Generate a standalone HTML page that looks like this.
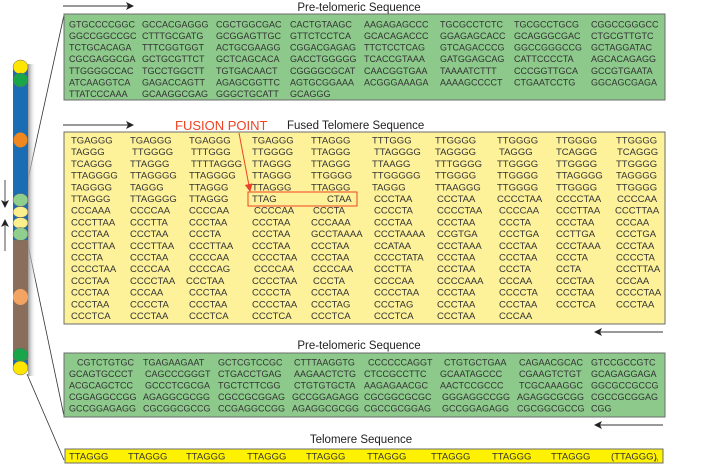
<!DOCTYPE html>
<html><head><meta charset="utf-8"><style>
html,body{margin:0;padding:0;background:#fff;width:702px;height:473px;overflow:hidden}
svg{display:block}
text{font-family:"Liberation Sans",sans-serif;fill:#333}
.s{font-size:9.5px}
.g{font-size:9px}
.t{font-size:11.5px;fill:#222}
</style></head><body>
<svg width="702" height="473" viewBox="0 0 702 473" xmlns="http://www.w3.org/2000/svg">
<defs>
<marker id="ah" markerWidth="8" markerHeight="8" refX="7" refY="4" orient="auto" markerUnits="userSpaceOnUse"><path d="M0,0 L8,4 L0,8 L2,4 z" fill="#222"/></marker>
<marker id="rh" markerWidth="8" markerHeight="8" refX="7" refY="4" orient="auto" markerUnits="userSpaceOnUse"><path d="M0,0 L8,4 L0,8 z" fill="#e8402a"/></marker>
<linearGradient id="sh" x1="0" x2="1"><stop offset="0" stop-color="#999"/><stop offset="1" stop-color="#fff" stop-opacity="0"/></linearGradient>
</defs>

<line x1="25" y1="193" x2="64" y2="15" stroke="#333" stroke-width="0.8"/>
<line x1="27" y1="240" x2="64" y2="416" stroke="#333" stroke-width="0.8"/>
<line x1="27" y1="374" x2="64" y2="460" stroke="#333" stroke-width="0.8"/>

<rect x="28" y="64" width="8" height="312" fill="url(#sh)"/>
<rect x="13" y="66" width="15" height="302" fill="#1a6db4"/>
<rect x="13" y="240" width="15" height="120" fill="#8b6d5b"/>
<ellipse cx="20.5" cy="67" rx="7.5" ry="7" fill="#ffe600" stroke="#666" stroke-width="0.5"/>
<ellipse cx="20.5" cy="80" rx="7.5" ry="7" fill="#19a54a" stroke="#666" stroke-width="0.5"/>
<ellipse cx="20.5" cy="140" rx="7" ry="7.5" fill="#f0871f"/>
<ellipse cx="20.5" cy="200" rx="7.5" ry="6.5" fill="#8fce8d" stroke="#666" stroke-width="0.5"/>
<ellipse cx="20.5" cy="212" rx="7.5" ry="5.5" fill="#fdf08c" stroke="#666" stroke-width="0.5"/>
<ellipse cx="20.5" cy="223" rx="7.5" ry="5.5" fill="#fdf08c" stroke="#666" stroke-width="0.5"/>
<ellipse cx="20.5" cy="234" rx="7.5" ry="6.5" fill="#8fce8d" stroke="#666" stroke-width="0.5"/>
<ellipse cx="20.5" cy="297" rx="7.5" ry="8" fill="#f4a462"/>
<ellipse cx="20.5" cy="355" rx="7.5" ry="7" fill="#19a54a" stroke="#666" stroke-width="0.5"/>
<ellipse cx="20.5" cy="368" rx="7.5" ry="7" fill="#ffe600" stroke="#666" stroke-width="0.5"/>
<line x1="5" y1="180" x2="5" y2="207" stroke="#222" stroke-width="0.8" marker-end="url(#ah)"/>
<line x1="5" y1="251" x2="5" y2="220" stroke="#222" stroke-width="0.8" marker-end="url(#ah)"/>

<line x1="63" y1="6" x2="133" y2="6" stroke="#333" stroke-width="1" marker-end="url(#ah)"/>
<line x1="63" y1="125" x2="133" y2="125" stroke="#333" stroke-width="1" marker-end="url(#ah)"/>
<line x1="663" y1="332" x2="595" y2="332" stroke="#333" stroke-width="1" marker-end="url(#ah)"/>
<line x1="663" y1="425" x2="595" y2="425" stroke="#333" stroke-width="1" marker-end="url(#ah)"/>

<text class="t" x="359" y="11" text-anchor="middle">Pre-telomeric Sequence</text>
<text class="t" x="287" y="129">Fused Telomere Sequence</text>
<text x="175" y="130" style="font-size:13px;fill:#ee4422">FUSION POINT</text>
<text class="t" x="359" y="349" text-anchor="middle">Pre-telomeric Sequence</text>
<text class="t" x="361" y="443" text-anchor="middle">Telomere Sequence</text>

<rect x="64" y="14" width="601" height="86" fill="#8cc98b" stroke="#6d6d6d" stroke-width="1"/>
<g class="g">
<text y="27.5"><tspan x="69">GTGCCCCGGC</tspan><tspan x="142">GCCACGAGGG</tspan><tspan x="216">CGCTGGCGAC</tspan><tspan x="290">CACTGTAAGC</tspan><tspan x="364">AAGAGAGCCC</tspan><tspan x="440">TGCGCCTCTC</tspan><tspan x="514">TGCGCCTGCG</tspan><tspan x="591">CGGCCGGGCC</tspan></text>
<text y="39"><tspan x="69">GGCCGGCCGC</tspan><tspan x="142">CTTTGCGATG</tspan><tspan x="216">GCGGAGTTGC</tspan><tspan x="290">GTTCTCCTCA</tspan><tspan x="364">GCACAGACCC</tspan><tspan x="440">GGAGAGCACC</tspan><tspan x="514">GCAGGGCGAC</tspan><tspan x="591">CTGCGTTGTC</tspan></text>
<text y="50.5"><tspan x="69">TCTGCACAGA</tspan><tspan x="142">TTTCGGTGGT</tspan><tspan x="216">ACTGCGAAGG</tspan><tspan x="290">CGGACGAGAG</tspan><tspan x="364">TTCTCCTCAG</tspan><tspan x="440">GTCAGACCCG</tspan><tspan x="514">GGCCGGGCCG</tspan><tspan x="591">GCTAGGATAC</tspan></text>
<text y="62"><tspan x="69">CGCGAGGCGA</tspan><tspan x="142">GCTGCGTTCT</tspan><tspan x="216">GCTCAGCACA</tspan><tspan x="290">GACCTGGGGG</tspan><tspan x="364">TCACCGTAAA</tspan><tspan x="440">GATGGAGCAG</tspan><tspan x="514">CATTCCCCTA</tspan><tspan x="591">AGCACAGAGG</tspan></text>
<text y="74"><tspan x="69">TTGGGGCCAC</tspan><tspan x="142">TGCCTGGCTT</tspan><tspan x="216">TGTGACAACT</tspan><tspan x="290">CGGGGCGCAT</tspan><tspan x="364">CAACGGTGAA</tspan><tspan x="440">TAAAATCTTT</tspan><tspan x="514">CCCGGTTGCA</tspan><tspan x="591">GCCGTGAATA</tspan></text>
<text y="85.5"><tspan x="69">ATCAAGGTCA</tspan><tspan x="142">GAGACCAGTT</tspan><tspan x="216">AGAGCGGTTC</tspan><tspan x="290">AGTGCGGAAA</tspan><tspan x="364">ACGGGAAAGA</tspan><tspan x="440">AAAAGCCCCT</tspan><tspan x="514">CTGAATCCTG</tspan><tspan x="591">GGCAGCGAGA</tspan></text>
<text y="97"><tspan x="69">TTATCCCAAA</tspan><tspan x="142">GCAAGGCGAG</tspan><tspan x="216">GGGCTGCATT</tspan><tspan x="290">GCAGGG</tspan></text>
</g>

<rect x="64" y="132" width="601" height="192" fill="#fdf19a" stroke="#6d6d6d" stroke-width="1"/>
<g class="s">
<text y="143.5"><tspan x="71">TGAGGG</tspan><tspan x="130">TGAGGG</tspan><tspan x="189">TGAGGG</tspan><tspan x="252">TGAGGG</tspan><tspan x="311">TTAGGG</tspan><tspan x="372">TTTGGG</tspan><tspan x="435">TTGGGG</tspan><tspan x="497">TTGGGG</tspan><tspan x="556">TTGGGG</tspan><tspan x="616">TTGGGG</tspan></text>
<text y="155.2"><tspan x="71">TAGGG</tspan><tspan x="132">TTGGGG</tspan><tspan x="191">TTTGGG</tspan><tspan x="252">TTGGGG</tspan><tspan x="311">TTAGGG</tspan><tspan x="374">TTAGGGG</tspan><tspan x="435">TAGGGG</tspan><tspan x="499">TAGGG</tspan><tspan x="556">TCAGGG</tspan><tspan x="617">TCAGGG</tspan></text>
<text y="166.9"><tspan x="71">TCAGGG</tspan><tspan x="130">TTAGGG</tspan><tspan x="191">TTTTAGGG</tspan><tspan x="252">TTAGGG</tspan><tspan x="311">TTAGGG</tspan><tspan x="372">TTAAGG</tspan><tspan x="435">TTTGGGG</tspan><tspan x="497">TTGGGG</tspan><tspan x="556">TTGGGG</tspan><tspan x="616">TTGGGG</tspan></text>
<text y="178.6"><tspan x="71">TTAGGGG</tspan><tspan x="130">TTAGGGG</tspan><tspan x="189">TTAGGGG</tspan><tspan x="252">TTAGGG</tspan><tspan x="311">TTGGGG</tspan><tspan x="372">TTGGGGG</tspan><tspan x="435">TTGGGG</tspan><tspan x="497">TTGGGG</tspan><tspan x="556">TTAGGGG</tspan><tspan x="616">TAGGGG</tspan></text>
<text y="190.3"><tspan x="71">TAGGGG</tspan><tspan x="130">TAGGG</tspan><tspan x="189">TTAGGG</tspan><tspan x="252">TTAGGG</tspan><tspan x="311">TTAGGG</tspan><tspan x="372">TAGGG</tspan><tspan x="435">TTAAGGG</tspan><tspan x="497">TTGGGG</tspan><tspan x="556">TTGGGG</tspan><tspan x="616">TTGGGG</tspan></text>
<text y="202"><tspan x="71">TTAGGG</tspan><tspan x="130">TTAGGGG</tspan><tspan x="189">TTAGGG</tspan><tspan x="252">TTAG</tspan><tspan x="327">CTAA</tspan><tspan x="374">CCCTAA</tspan><tspan x="437">CCCTAA</tspan><tspan x="497">CCCCTAA</tspan><tspan x="556">CCCCTAA</tspan><tspan x="617">CCCCAA</tspan></text>
<text y="213.7"><tspan x="71">CCCAAA</tspan><tspan x="130">CCCCAA</tspan><tspan x="189">CCCCAA</tspan><tspan x="254">CCCCAA</tspan><tspan x="313">CCCTA</tspan><tspan x="374">CCCCTA</tspan><tspan x="437">CCCCTAA</tspan><tspan x="499">CCCCAA</tspan><tspan x="556">CCCTTAA</tspan><tspan x="615">CCCTTAA</tspan></text>
<text y="225.4"><tspan x="71">CCCTTAA</tspan><tspan x="130">CCCTTA</tspan><tspan x="189">CCCTAA</tspan><tspan x="252">CCCTAA</tspan><tspan x="311">CCCAAA</tspan><tspan x="374">CCCTAA</tspan><tspan x="437">CCCTAA</tspan><tspan x="499">CCCTA</tspan><tspan x="556">CCCTAA</tspan><tspan x="616">CCCAA</tspan></text>
<text y="237.1"><tspan x="71">CCCTAA</tspan><tspan x="130">CCCTAA</tspan><tspan x="189">CCCTA</tspan><tspan x="252">CCCTAA</tspan><tspan x="311">GCCTAAAA</tspan><tspan x="374">CCCTAAAA</tspan><tspan x="437">CCGTGA</tspan><tspan x="499">CCCTGA</tspan><tspan x="556">CCTTGA</tspan><tspan x="616">CCCTGA</tspan></text>
<text y="248.8"><tspan x="71">CCCTTAA</tspan><tspan x="130">CCCTTAA</tspan><tspan x="189">CCCTTAA</tspan><tspan x="252">CCCTAA</tspan><tspan x="311">CCCTAA</tspan><tspan x="374">CCATAA</tspan><tspan x="437">CCCTAAA</tspan><tspan x="499">CCCTAA</tspan><tspan x="556">CCCTAAA</tspan><tspan x="616">CCCTAA</tspan></text>
<text y="260.5"><tspan x="71">CCCTA</tspan><tspan x="130">CCCTAA</tspan><tspan x="189">CCCCAA</tspan><tspan x="252">CCCCTAA</tspan><tspan x="311">CCCTAA</tspan><tspan x="374">CCCCTATA</tspan><tspan x="437">CCCTAA</tspan><tspan x="499">CCCTAA</tspan><tspan x="556">CCCTA</tspan><tspan x="616">CCCCTA</tspan></text>
<text y="272.2"><tspan x="71">CCCCTAA</tspan><tspan x="130">CCCCAA</tspan><tspan x="189">CCCCAG</tspan><tspan x="254">CCCCAA</tspan><tspan x="313">CCCCAA</tspan><tspan x="374">CCCTTA</tspan><tspan x="437">CCCTAA</tspan><tspan x="499">CCCTA</tspan><tspan x="556">CCTA</tspan><tspan x="616">CCCTTAA</tspan></text>
<text y="283.9"><tspan x="71">CCCTAA</tspan><tspan x="130">CCCCTAA</tspan><tspan x="186">CCCTAA</tspan><tspan x="252">CCCCTAA</tspan><tspan x="313">CCCTA</tspan><tspan x="374">CCCCAA</tspan><tspan x="437">CCCCAAA</tspan><tspan x="499">CCCAA</tspan><tspan x="556">CCCTAA</tspan><tspan x="616">CCCAA</tspan></text>
<text y="295.6"><tspan x="71">CCCTAA</tspan><tspan x="130">CCCAA</tspan><tspan x="189">CCCTAA</tspan><tspan x="252">CCCCTA</tspan><tspan x="311">CCCTAA</tspan><tspan x="374">CCCCTAA</tspan><tspan x="437">CCCTAA</tspan><tspan x="499">CCCCTA</tspan><tspan x="556">CCCTAA</tspan><tspan x="616">CCCCTAA</tspan></text>
<text y="307.3"><tspan x="71">CCCTAA</tspan><tspan x="130">CCCCTA</tspan><tspan x="189">CCCTAA</tspan><tspan x="252">CCCCTAA</tspan><tspan x="311">CCCTAG</tspan><tspan x="374">CCCTAG</tspan><tspan x="437">CCCTAA</tspan><tspan x="499">CCCTAA</tspan><tspan x="556">CCCTCA</tspan><tspan x="616">CCCTAA</tspan></text>
<text y="319"><tspan x="71">CCCTCA</tspan><tspan x="130">CCCTAA</tspan><tspan x="189">CCCTCA</tspan><tspan x="252">CCCTCA</tspan><tspan x="311">CCCTCA</tspan><tspan x="374">CCCTCA</tspan><tspan x="437">CCCTAA</tspan><tspan x="499">CCCAA</tspan></text>
</g>
<rect x="248" y="192" width="109" height="14" fill="none" stroke="#ee4422" stroke-width="1"/>
<line x1="239" y1="133" x2="250" y2="191" stroke="#ee4422" stroke-width="1" marker-end="url(#rh)"/>

<rect x="64" y="353" width="601" height="64" fill="#8cc98b" stroke="#6d6d6d" stroke-width="1"/>
<g class="g">
<text y="365.5"><tspan x="77">CGTCTGTGC</tspan><tspan x="143">TGAGAAGAAT</tspan><tspan x="218">GCTCGTCCGC</tspan><tspan x="294">CTTTAAGGTG</tspan><tspan x="368">CCCCCCAGGT</tspan><tspan x="444">CTGTGCTGAA</tspan><tspan x="519">CAGAACGCAC</tspan><tspan x="591">GTCCGCCGTC</tspan></text>
<text y="377"><tspan x="69">GCAGTGCCCT</tspan><tspan x="145">CAGCCCGGGT</tspan><tspan x="218">CTGACCTGAG</tspan><tspan x="294">AAGAACTCTG</tspan><tspan x="364">CTCCGCCTTC</tspan><tspan x="440">GCAATAGCCC</tspan><tspan x="519">CGAAGTCTGT</tspan><tspan x="591">GCAGAGGAGA</tspan></text>
<text y="388.5"><tspan x="69">ACGCAGCTCC</tspan><tspan x="145">GCCCTCGCGA</tspan><tspan x="218">TGCTCTTCGG</tspan><tspan x="294">CTGTGTGCTA</tspan><tspan x="364">AAGAGAACGC</tspan><tspan x="440">AACTCCGCCC</tspan><tspan x="519">TCGCAAAGGC</tspan><tspan x="591">GGCGCCGCCG</tspan></text>
<text y="400"><tspan x="69">CGGAGGCCGG</tspan><tspan x="143">AGAGGCGCGG</tspan><tspan x="218">CGCCGCGGAG</tspan><tspan x="292">GCCGGAGAGG</tspan><tspan x="364">CGCGGCGCGC</tspan><tspan x="442">GGGAGGCCGG</tspan><tspan x="517">AGAGGCGCGG</tspan><tspan x="591">CGCCGCGGAG</tspan></text>
<text y="411.5"><tspan x="69">GCCGGAGAGG</tspan><tspan x="143">CGCGGCGCCG</tspan><tspan x="218">CCGAGGCCGG</tspan><tspan x="292">AGAGGCGCGG</tspan><tspan x="364">CGCCGCGGAG</tspan><tspan x="442">GCCGGAGAGG</tspan><tspan x="517">CGCGGCGCCG</tspan><tspan x="591">CGG</tspan></text>
</g>

<rect x="65" y="449" width="598" height="14" fill="#fff200" stroke="#6d6d6d" stroke-width="1"/>
<g class="s">
<text y="459.5"><tspan x="69">TTAGGG</tspan><tspan x="128">TTAGGG</tspan><tspan x="186">TTAGGG</tspan><tspan x="247">TTAGGG</tspan><tspan x="306">TTAGGG</tspan><tspan x="367">TTAGGG</tspan><tspan x="431">TTAGGG</tspan><tspan x="492">TTAGGG</tspan><tspan x="551">TTAGGG</tspan><tspan x="611">(TTAGGG)</tspan><tspan x="655" dy="2" style="font-size:5px">n</tspan></text>
</g>
</svg>
</body></html>
